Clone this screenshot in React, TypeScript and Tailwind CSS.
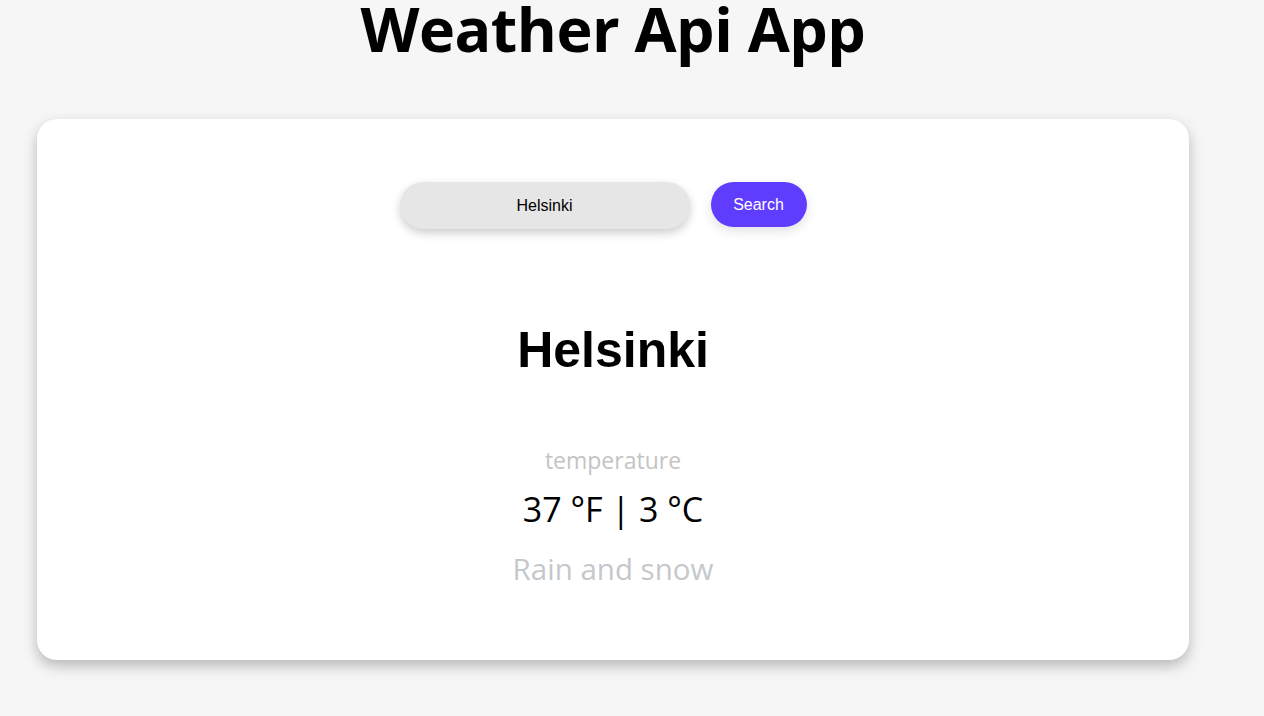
import { useState } from "react";

const App = () => {
  const [city, setCity] = useState("Helsinki");

  return (
    <div className="min-h-screen w-full bg-[#f6f6f6] font-['Open_Sans',sans-serif]">
      <div className="w-[1226px] flex flex-col items-center">
        {/* 제목 */}
        <h1 className="text-[61px] font-bold leading-[57px] text-black tracking-[-0.5px]">
          Weather Api App
        </h1>

        {/* 카드 */}
        <div className="mt-[62px] w-[1152px] h-[541px] bg-white rounded-[20px] shadow-[0_6px_14px_rgba(0,0,0,0.25)] flex flex-col items-center pt-[63px]">
          {/* 검색 영역 */}
          <div className="flex items-center gap-[21px] mr-[20px] font-['Liberation_Sans',Arial,sans-serif]">
            <input
              value={city}
              onChange={(e) => setCity(e.target.value)}
              className="w-[290px] h-[47px] rounded-full bg-[#e6e6e6] text-center text-[16px] text-black outline-none shadow-[0_4px_10px_rgba(0,0,0,0.2)]"
            />
            <button className="w-[96px] h-[45px] rounded-full bg-[#603cff] text-white text-[16px] -mt-[2px] shadow-[0_4px_12px_rgba(0,0,0,0.12)]">
              Search
            </button>
          </div>

          <h2 className="mt-[92px] text-[50px] font-bold leading-[58px] font-['Liberation_Sans',Arial,sans-serif] text-black">
            {city}
          </h2>

          {/* 날씨 정보 */}
          <div className="mt-[66px] flex flex-col items-center">
            <span className="text-[23px] leading-[30px] text-[#c4c4c4]">temperature</span>
            <span className="mt-[12px] text-[34px] leading-[44px] text-black">37 °F | 3 °C</span>
            <span className="mt-[18px] text-[29.5px] leading-[40px] text-[#c4c8cc]">Rain and snow</span>
          </div>
        </div>
      </div>
    </div>
  );
};

export default App;
